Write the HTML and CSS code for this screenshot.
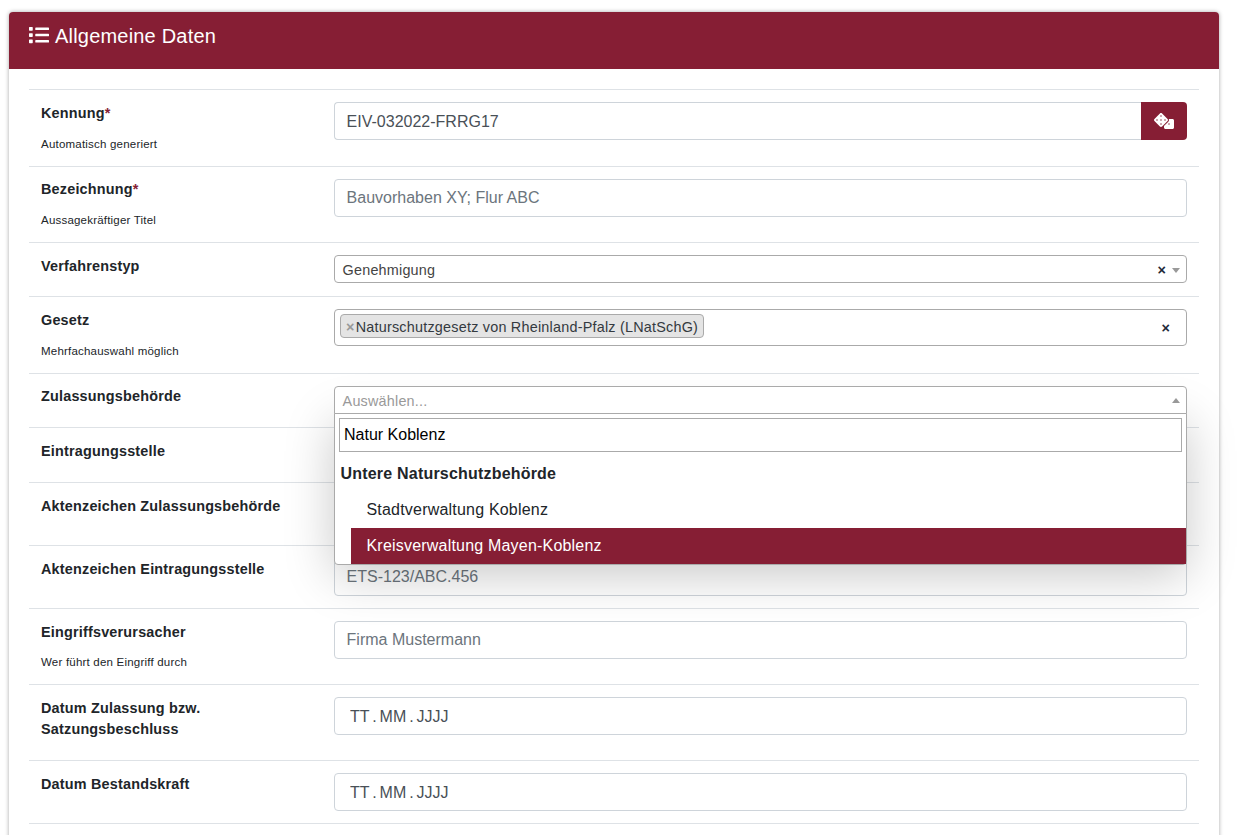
FILE: index.html
```html
<!DOCTYPE html>
<html lang="de">
<head>
<meta charset="utf-8">
<title>Allgemeine Daten</title>
<link rel="stylesheet" href="styles.css">
</head>
<body>
<section class="card">
  <header class="card-header">
    <svg class="title-icon" viewBox="0 0 512 512" aria-hidden="true"><path d="M80 368H16a16 16 0 0 0-16 16v64a16 16 0 0 0 16 16h64a16 16 0 0 0 16-16v-64a16 16 0 0 0-16-16zm0-320H16A16 16 0 0 0 0 64v64a16 16 0 0 0 16 16h64a16 16 0 0 0 16-16V64a16 16 0 0 0-16-16zm0 160H16a16 16 0 0 0-16 16v64a16 16 0 0 0 16 16h64a16 16 0 0 0 16-16v-64a16 16 0 0 0-16-16zm416 176H176a16 16 0 0 0-16 16v32a16 16 0 0 0 16 16h320a16 16 0 0 0 16-16v-32a16 16 0 0 0-16-16zm0-320H176a16 16 0 0 0-16 16v32a16 16 0 0 0 16 16h320a16 16 0 0 0 16-16V80a16 16 0 0 0-16-16zm0 160H176a16 16 0 0 0-16 16v32a16 16 0 0 0 16 16h320a16 16 0 0 0 16-16v-32a16 16 0 0 0-16-16z"/></svg>
    <h1 class="card-title">Allgemeine Daten</h1>
  </header>
  <div class="card-body">
    <div class="row">
      <div class="label-cell"><label class="label">Kennung<span class="req">*</span></label><small class="hint">Automatisch generiert</small></div>
      <div class="value-cell input-group">
        <input class="control control-joined" type="text" value="EIV-032022-FRRG17">
        <button class="dice-btn" type="button" aria-label="Generieren">
          <svg class="dice-icon" viewBox="0 0 640 512" aria-hidden="true"><path d="M592 192H473.26c12.69 29.59 7.12 65.2-17 89.32L320 417.58V464c0 26.51 21.49 48 48 48h224c26.51 0 48-21.49 48-48V240c0-26.51-21.49-48-48-48zM480 376c-13.25 0-24-10.75-24-24 0-13.26 10.75-24 24-24s24 10.74 24 24c0 13.25-10.75 24-24 24zm-46.37-186.7L258.7 14.37c-19.16-19.16-50.23-19.16-69.39 0L14.37 189.3c-19.16 19.16-19.16 50.23 0 69.39L189.3 433.63c19.16 19.16 50.23 19.16 69.39 0L433.63 258.7c19.16-19.17 19.16-50.24 0-69.4zM96 248c-13.25 0-24-10.75-24-24 0-13.26 10.75-24 24-24s24 10.74 24 24c0 13.25-10.75 24-24 24zm128 128c-13.25 0-24-10.75-24-24 0-13.26 10.75-24 24-24s24 10.74 24 24c0 13.25-10.75 24-24 24zm0-128c-13.25 0-24-10.75-24-24 0-13.26 10.75-24 24-24s24 10.74 24 24c0 13.25-10.75 24-24 24zm0-128c-13.25 0-24-10.75-24-24 0-13.26 10.75-24 24-24s24 10.74 24 24c0 13.25-10.75 24-24 24zm128 128c-13.25 0-24-10.75-24-24 0-13.26 10.75-24 24-24s24 10.74 24 24c0 13.25-10.75 24-24 24z"/></svg>
        </button>
      </div>
    </div>
    <div class="row">
      <div class="label-cell"><label class="label">Bezeichnung<span class="req">*</span></label><small class="hint">Aussagekräftiger Titel</small></div>
      <div class="value-cell"><input class="control" type="text" placeholder="Bauvorhaben XY; Flur ABC"></div>
    </div>
    <div class="row">
      <div class="label-cell"><label class="label">Verfahrenstyp</label></div>
      <div class="value-cell">
        <div class="select">
          <span class="select-text">Genehmigung</span>
          <span class="clear">×</span>
          <span class="arrow arrow-down"></span>
        </div>
      </div>
    </div>
    <div class="row">
      <div class="label-cell"><label class="label">Gesetz</label><small class="hint">Mehrfachauswahl möglich</small></div>
      <div class="value-cell">
        <div class="select select-multi">
          <span class="chip"><span class="chip-x">×</span>Naturschutzgesetz von Rheinland-Pfalz (LNatSchG)</span>
          <span class="clear clear-multi">×</span>
        </div>
      </div>
    </div>
    <div class="row">
      <div class="label-cell"><label class="label">Zulassungsbehörde</label></div>
      <div class="value-cell value-anchor">
        <div class="select select-open">
          <span class="select-text select-placeholder">Auswählen...</span>
          <span class="arrow arrow-up"></span>
        </div>
        <div class="dropdown">
          <div class="dropdown-search"><input class="search-input" type="text" value="Natur Koblenz"></div>
          <div class="group-label">Untere Naturschutzbehörde</div>
          <ul class="options">
            <li class="option">Stadtverwaltung Koblenz</li>
            <li class="option option-active">Kreisverwaltung Mayen-Koblenz</li>
          </ul>
        </div>
      </div>
    </div>
    <div class="row">
      <div class="label-cell"><label class="label">Eintragungsstelle</label></div>
      <div class="value-cell"><div class="select"></div></div>
    </div>
    <div class="row">
      <div class="label-cell"><label class="label">Aktenzeichen Zulassungsbehörde</label></div>
      <div class="value-cell"><input class="control" type="text"></div>
    </div>
    <div class="row">
      <div class="label-cell"><label class="label">Aktenzeichen Eintragungsstelle</label></div>
      <div class="value-cell"><input class="control" type="text" placeholder="ETS-123/ABC.456"></div>
    </div>
    <div class="row">
      <div class="label-cell"><label class="label">Eingriffsverursacher</label><small class="hint">Wer führt den Eingriff durch</small></div>
      <div class="value-cell"><input class="control" type="text" placeholder="Firma Mustermann"></div>
    </div>
    <div class="row">
      <div class="label-cell"><label class="label">Datum Zulassung bzw. Satzungsbeschluss</label></div>
      <div class="value-cell"><input class="control control-date" type="text" placeholder="TT . MM . JJJJ"></div>
    </div>
    <div class="row">
      <div class="label-cell"><label class="label">Datum Bestandskraft</label></div>
      <div class="value-cell"><input class="control control-date" type="text" placeholder="TT . MM . JJJJ"></div>
    </div>
    <div class="row row-end"></div>
  </div>
</section>
</body>
</html>
```

FILE: styles.css
```css
* { box-sizing: border-box; }
html, body { height: 100%; overflow: hidden; }
body {
  margin: 0;
  padding: 12px 18px 0 9px;
  background: #fff;
  color: #212529;
  font-family: "Liberation Sans", Arial, sans-serif;
  font-size: 16px;
  line-height: 1.5;
  letter-spacing: 0.2px;
}
.card {
  background: #fff;
  border-radius: 4px;
  box-shadow: 0 0 4px rgba(0, 0, 0, 0.35);
}
.card-header {
  display: flex;
  align-items: center;
  gap: 6px;
  height: 57.45px;
  padding: 0 20px 10px;
  background: #861e34;
  color: #fff;
  border-radius: 4px 4px 0 0;
}
.title-icon { width: 20px; height: 20px; margin-bottom: 2px; fill: #fff; flex: none; }
.card-title { margin: 0; font-size: 20px; font-weight: 400; line-height: 30px; }
.card-body { padding: 20px 20px 40px; }
.row {
  display: grid;
  grid-template-columns: 293px 853px;
  padding: 12px;
  border-top: 1px solid #dee2e6;
}
.row-end { padding-bottom: 30px; }
.label-cell { display: flex; flex-direction: column; align-items: flex-start; }
.label {
  display: block;
  margin-bottom: 7.15px;
  padding-top: 0.85px;
  font-size: 14.4px;
  font-weight: 700;
  line-height: 21.6px;
}
.req { color: #861e34; }
.hint { display: block; margin-top: 3.2px; font-size: 11.52px; line-height: 18.4px; }
.value-cell { min-width: 0; }
.value-anchor { position: relative; }
.input-group { display: flex; }
.control {
  display: block;
  width: 100%;
  height: 38px;
  padding: 6px 12px 6px 11.6px;
  border: 1px solid #ced4da;
  border-radius: 4px;
  background: #fff;
  color: #495057;
  font: inherit;
  line-height: 24px;
  outline: none;
}
.control::placeholder { color: #6c757d; opacity: 1; }
.control-joined { flex: 1; padding-top: 7px; padding-bottom: 5px; border-radius: 4px 0 0 4px; border-right: 0; }
.control-date { padding: 7px 12px 5px 15px; word-spacing: -1.5px; }
.control-date::placeholder { color: #495057; }
.dice-btn {
  flex: none;
  display: flex;
  align-items: center;
  justify-content: center;
  width: 46px;
  height: 38px;
  padding: 0;
  border: 0;
  border-radius: 0 4px 4px 0;
  background: #861e34;
}
.dice-icon { width: 20px; height: 16px; fill: #fff; }
.select {
  display: flex;
  align-items: center;
  height: 28.6px;
  padding: 2px 6px 0 7.6px;
  border: 1px solid #aaa;
  border-radius: 4px;
  background: #fff;
  font-size: 14.4px;
}
.select-text { flex: 1; padding-top: 2px; color: #444; }
.select-placeholder { color: #999; }
.select-open { position: relative; z-index: 11; border-radius: 4px 4px 0 0; }
.clear { margin-right: 6px; color: #1f2a3a; font-size: 14.4px; font-weight: 700; line-height: 1; }
.arrow { width: 0; height: 0; border-left: 4px solid transparent; border-right: 4px solid transparent; }
.arrow-down { border-top: 5px solid #999; }
.arrow-up { border-bottom: 5px solid #999; }
.select-multi {
  height: 37px;
  justify-content: space-between;
  padding: 0 16px 0 5px;
}
.clear-multi { margin: 0; }
.chip {
  display: inline-flex;
  align-items: center;
  height: 24px;
  margin-top: -3px;
  padding: 2px 5px 0 5px;
  border: 1px solid #aaa;
  border-radius: 4px;
  background: #e4e4e4;
  color: #343a40;
  font-size: 14.4px;
  letter-spacing: 0.22px;
  line-height: 20px;
}
.chip-x { margin-right: 1px; color: #999; font-weight: 700; }
.dropdown {
  position: absolute;
  z-index: 10;
  top: 27px;
  left: 0;
  right: 0;
  border: 1px solid #aaa;
  border-radius: 0 0 4px 4px;
  background: #fff;
  box-shadow: 0 10px 50px rgba(0, 0, 0, 0.22);
}
.dropdown-search { padding: 4px; }
.search-input {
  display: block;
  width: 100%;
  height: 34px;
  padding: 4px;
  border: 1px solid #aaa;
  border-radius: 0;
  color: #000;
  font: inherit;
  outline: none;
}
.group-label {
  padding: 6px 5.5px;
  font-weight: 700;
  line-height: 24px;
}
.options { margin: 0; padding: 0 0 0 16px; list-style: none; }
.option { height: 36px; padding: 6px 16px 6px 15.5px; line-height: 24px; }
.option-active { background: #861e34; color: #fff; }
```
